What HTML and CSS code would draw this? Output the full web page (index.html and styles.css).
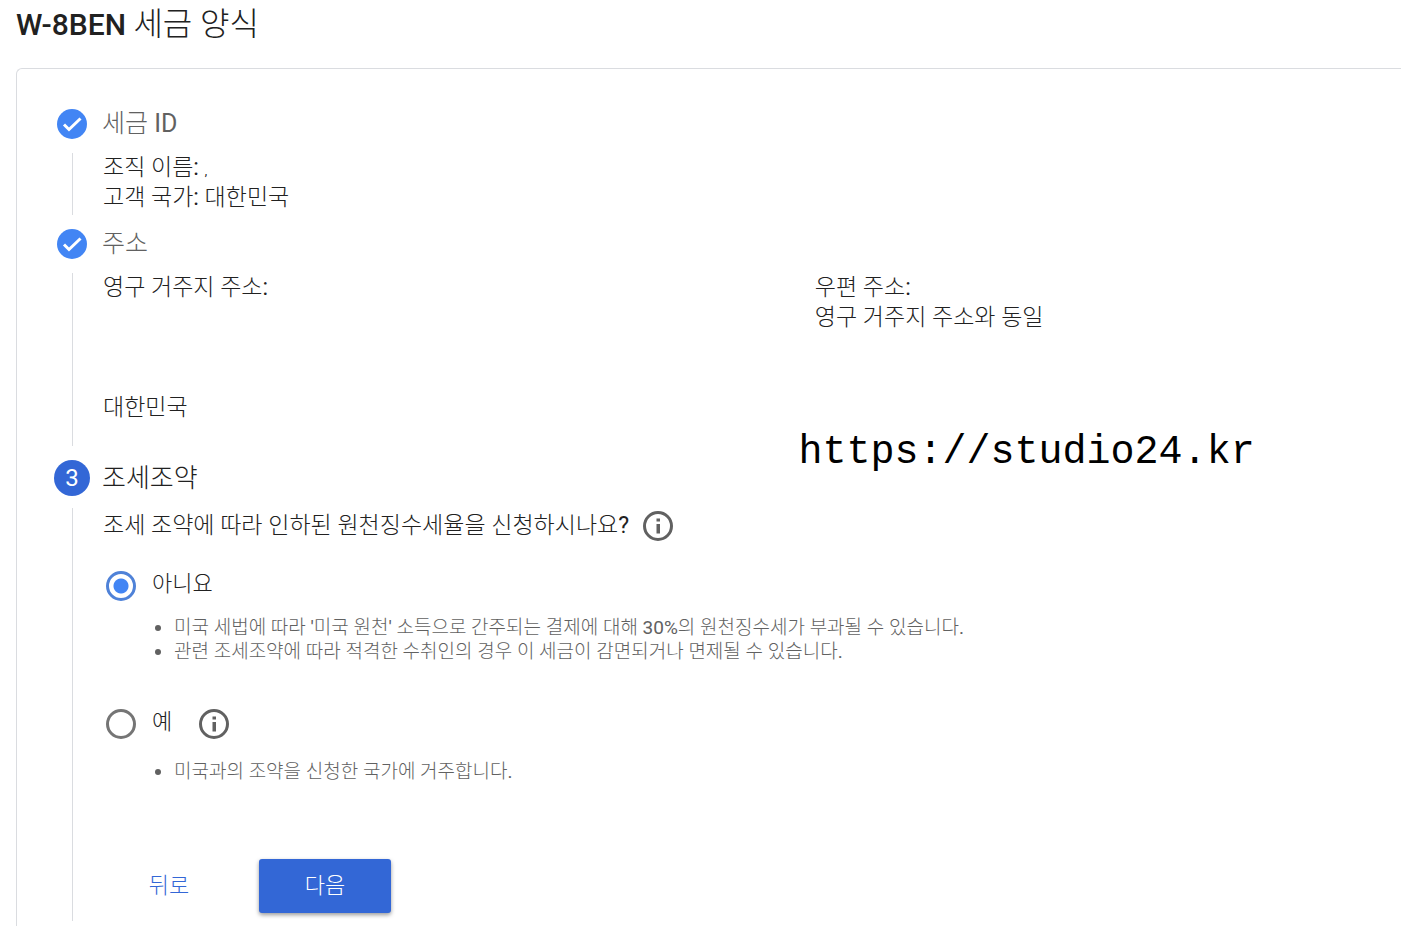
FILE: index.html
```html
<!DOCTYPE html>
<html lang="ko">
<head>
<meta charset="utf-8">
<title>W-8BEN 세금 양식</title>
<link rel="stylesheet" href="styles.css">
</head>
<body>
<h1 class="page-title">W-8BEN <span class="title-name">세금 양식</span></h1>
<main class="card">
  <section class="step">
    <div class="rail">
      <svg class="done" viewBox="0 0 30 30" aria-hidden="true"><circle cx="15" cy="15" r="15"/><path d="M7 15.500l5 5L23.500 9.500"/></svg>
      <span class="line"></span>
    </div>
    <div class="content">
      <h2 class="heading">세금 ID</h2>
      <div class="details">
        <p>조직 이름: <small class="mark">,</small></p>
        <p>고객 국가: 대한민국</p>
      </div>
    </div>
  </section>
  <section class="step">
    <div class="rail">
      <svg class="done" viewBox="0 0 30 30" aria-hidden="true"><circle cx="15" cy="15" r="15"/><path d="M7 15.500l5 5L23.500 9.500"/></svg>
      <span class="line"></span>
    </div>
    <div class="content">
      <h2 class="heading">주소</h2>
      <div class="details addresses">
        <div class="address">
          <p>영구 거주지 주소:</p>
          <p>대한민국</p>
        </div>
        <div>
          <p>우편 주소:</p>
          <p>영구 거주지 주소와 동일</p>
        </div>
      </div>
    </div>
  </section>
  <section class="step current">
    <div class="rail">
      <span class="number">3</span>
      <span class="line"></span>
    </div>
    <form class="content">
      <h2 class="heading">조세조약</h2>
      <div class="question">
        <p id="question">조세 조약에 따라 인하된 원천징수세율을 신청하시나요?</p>
        <button class="info" type="button" aria-label="도움말"><svg viewBox="0 0 30 30"><circle cx="15" cy="15" r="13.500"/><path d="M13.500 7.500h3.500v3h-3.500zM13.500 13h3.500v9.500h-3.500z"/></svg></button>
      </div>
      <div class="options" role="radiogroup" aria-labelledby="question">
        <div class="option">
          <input class="radio" type="radio" name="treaty" id="no" checked>
          <label for="no">아니요</label>
        </div>
        <ul class="notes">
          <li>미국 세법에 따라 '미국 원천' 소득으로 간주되는 결제에 대해 30%의 원천징수세가 부과될 수 있습니다.</li>
          <li>관련 조세조약에 따라 적격한 수취인의 경우 이 세금이 감면되거나 면제될 수 있습니다.</li>
        </ul>
        <div class="option second">
          <input class="radio" type="radio" name="treaty" id="yes">
          <label for="yes">예</label>
          <button class="info" type="button" aria-label="도움말"><svg viewBox="0 0 30 30"><circle cx="15" cy="15" r="13.500"/><path d="M13.500 7.500h3.500v3h-3.500zM13.500 13h3.500v9.500h-3.500z"/></svg></button>
        </div>
        <ul class="notes">
          <li>미국과의 조약을 신청한 국가에 거주합니다.</li>
        </ul>
      </div>
      <div class="actions">
        <button class="btn" type="button">뒤로</button>
        <button class="btn primary" type="button">다음</button>
      </div>
    </form>
  </section>
</main>
<div class="watermark">https://studio24.kr</div>
</body>
</html>
```
FILE: styles.css
```css
* { box-sizing: border-box; }
body {
  margin: 0;
  position: relative;
  overflow: hidden;
  background: #fff;
  color: #212121;
  font-family: Roboto, "Noto Sans CJK KR Light", "Noto Sans CJK KR", sans-serif;
  font-size: 22px;
  font-weight: 400;
  line-height: 30px;
}
h1, h2, p, ul { margin: 0; padding: 0; }
p { font-size: 23px; }
button { font: inherit; border: 0; background: none; padding: 0; cursor: pointer; }
.page-title {
  padding: 5px 16px 23px;
  font-size: 30px;
  font-weight: 500;
  line-height: 40px;
}
.title-name { font-size: 32px; font-weight: 300; line-height: 32px; }
.card {
  margin-left: 16px;
  padding: 40px 0 0 37px;
  border: 1px solid #dadce0;
  border-right: 0;
  border-bottom: 0;
  border-radius: 6px 0 0 0;
}
.step { display: flex; gap: 12px; }
.rail {
  display: flex;
  flex: 0 0 36px;
  flex-direction: column;
  align-items: center;
  gap: 14px;
  padding-bottom: 14px;
}
.done { width: 30px; height: 30px; flex: none; fill: #4285f4; }
.done path { fill: none; stroke: #fff; stroke-width: 3; }
.line { flex: 1; width: 1px; background: #dadce0; }
.content { flex: 1; min-width: 0; }
.heading {
  color: #616161;
  font-size: 25px;
  font-weight: 400;
  line-height: 30px;
}
.details { padding: 14px 0 16px 1px; }
.mark { font-size: 12px; line-height: 12px; }
.addresses {
  display: grid;
  grid-template-columns: 17fr 14fr;
  padding-bottom: 37px;
}
.address { display: flex; flex-direction: column; gap: 90px; }
.current .rail { gap: 12px; padding-bottom: 5px; }
.current .heading { color: #212121; font-size: 26px; line-height: 36px; }
.number {
  width: 36px;
  height: 36px;
  border-radius: 50%;
  background: #3367d6;
  color: #fff;
  font-size: 24px;
  line-height: 36px;
  text-align: center;
}
.question { display: flex; gap: 14px; padding: 15px 0 30px 1px; }
.info { width: 30px; height: 30px; flex: none; }
.info svg { display: block; width: 30px; height: 30px; fill: #616161; }
.info circle { fill: none; stroke: #616161; stroke-width: 3; }
.option { display: flex; gap: 16px; padding-left: 4px; }
.option label { line-height: 26px; }
.option .info { margin-left: 11px; }
.second { padding-top: 45px; padding-bottom: 6px; }
.radio {
  appearance: none;
  width: 30px;
  height: 30px;
  margin: 0;
  border: 3px solid #757575;
  border-radius: 50%;
}
.radio:checked {
  border-color: #4f82d8;
  background: radial-gradient(circle, #4285f4 7px, #fff 8px);
}
.notes {
  padding: 15px 0 0 72px;
  color: #616161;
  font-size: 19px;
  line-height: 24px;
}
.actions { display: flex; gap: 48px; padding: 75px 0 13px 25px; }
.btn {
  min-width: 84px;
  height: 54px;
  border-radius: 3px;
  color: #3367d6;
}
.primary {
  min-width: 132px;
  background: #3367d6;
  color: #fff;
  box-shadow: 0 2px 4px #0006;
}
.watermark {
  position: absolute;
  top: 429px;
  left: 57%;
  color: #000;
  font-family: "Liberation Mono", monospace;
  font-size: 40px;
  line-height: 48px;
}
```
